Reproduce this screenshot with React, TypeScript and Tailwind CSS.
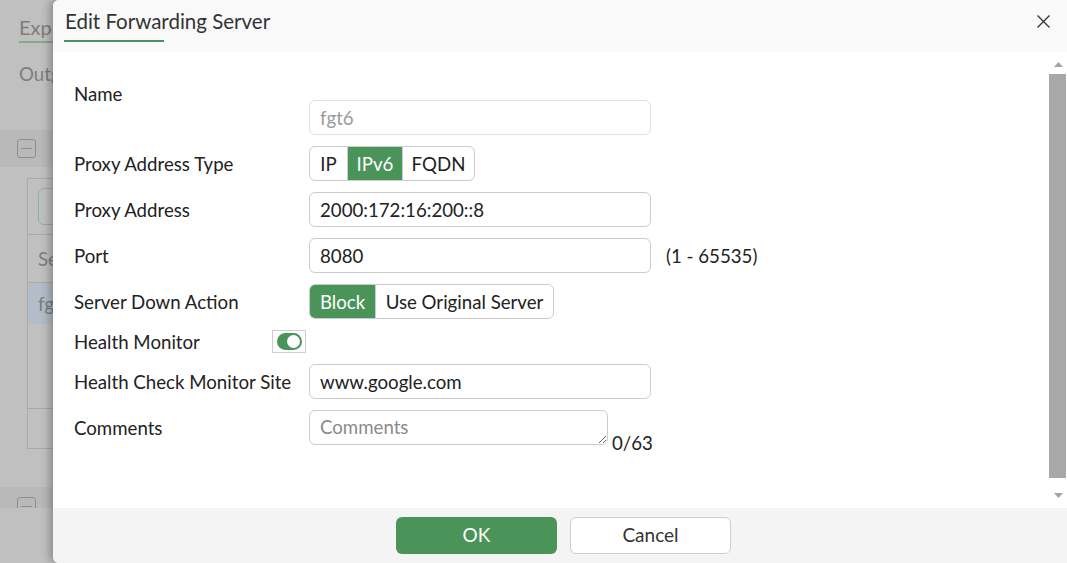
import React from "react";

const GREEN = "bg-[#4a9459]";

function MinusBox() {
  return (
    <div className="flex h-[19px] w-[19px] items-center justify-center rounded-[3px] border border-[#8e8e8e]">
      <div className="h-px w-[11px] bg-[#8e8e8e]" />
    </div>
  );
}

function Background() {
  return (
    <div className="flex h-full flex-col text-[#7d7d7d]">
      <div className="h-[130px] shrink-0 pl-[19px] pt-[15px]">
        <div className="inline-block border-b-2 border-[#86a98e] pb-px text-[20px] leading-[25px]">
          Explicit Proxy
        </div>
        <div className="mt-[19px] text-[18.67px] leading-[24px]">Outgoing Proxy</div>
      </div>
      <div className="flex h-[37px] shrink-0 items-center bg-[#b9b9b9] pl-[17px]">
        <MinusBox />
      </div>
      <div className="h-[11px] shrink-0" />
      <div className="ml-[27px] flex h-[271px] shrink-0 flex-col border-b border-l border-t border-[#a9a9a9]">
        <div className="h-[56px] shrink-0 border-b border-[#a9a9a9] pl-[10px] pt-[9px]">
          <div className="h-[37px] w-[90px] rounded-[6px] border border-[#8fb097]" />
        </div>
        <div className="flex h-[48px] shrink-0 items-center border-b border-[#a9a9a9] pl-[10px] text-[18.67px]">
          Server
        </div>
        <div className="flex h-[41px] shrink-0 items-center bg-[#b4bcc9] pl-[10px] text-[18.67px]">fgt6</div>
        <div className="h-[85px] shrink-0 border-b border-[#a9a9a9]" />
        <div className="flex-1" />
      </div>
      <div className="h-[38px] shrink-0" />
      <div className="h-[21px] shrink-0 overflow-hidden bg-[#b9b9b9] pl-[17px] pt-[10px]">
        <MinusBox />
      </div>
      <div className="flex-1" />
    </div>
  );
}

function Label({ children, w = "w-[235px]" }: { children: React.ReactNode; w?: string }) {
  return <div className={`${w} shrink-0 text-[18.67px] leading-[24px] text-[#222]`}>{children}</div>;
}

function TextInput({ value, disabled }: { value: string; disabled?: boolean }) {
  return (
    <input
      readOnly
      value={value}
      className={`h-[35px] w-[342px] rounded-[6px] border bg-white px-[10px] text-[18.67px] outline-none ${
        disabled ? "border-[#e2e2e2] text-[#9a9a9a]" : "border-[#cdcdcd] text-[#222]"
      }`}
    />
  );
}

function Segmented({ items }: { items: { label: string; w: string; active?: boolean }[] }) {
  return (
    <div className="flex h-[35px] overflow-hidden rounded-[6px] border border-[#cdcdcd] bg-white">
      {items.map((it, i) => (
        <div
          key={it.label}
          className={`flex h-full items-center justify-center text-[18.67px] ${it.w} ${
            i > 0 ? "border-l border-[#cdcdcd]" : ""
          } ${it.active ? `${GREEN} border-[#4a9459] text-white` : "text-[#222]"}`}
        >
          {it.label}
        </div>
      ))}
    </div>
  );
}

function Triangle({ up }: { up?: boolean }) {
  return (
    <svg width="9" height="5" viewBox="0 0 9 5" className="shrink-0">
      {up ? <polygon points="4.5,0 9,5 0,5" fill="#a3a3a3" /> : <polygon points="0,0 9,0 4.5,5" fill="#a3a3a3" />}
    </svg>
  );
}

function Modal() {
  return (
    <div className="absolute left-[53px] top-0 flex h-[563px] w-[1014px] flex-col overflow-hidden rounded-l-[6px] bg-white shadow-[-3px_0_10px_rgba(0,0,0,0.3)]">
      {/* header */}
      <div className="flex h-[52px] shrink-0 items-start justify-between bg-[#f9f9f9] pl-[11px] pr-[17px]">
        <div className="pt-[8px]">
          <div className="pl-px text-[20.5px] leading-[26px] text-[#333]">Edit Forwarding Server</div>
          <div className={`mt-[6px] h-[2px] w-[100px] ${GREEN}`} />
        </div>
        <button className="mt-[15px] flex h-[13px] w-[13px] items-center justify-center">
          <svg width="13" height="13" viewBox="0 0 13 13">
            <path d="M0.5 0.5L12.5 12.5M12.5 0.5L0.5 12.5" stroke="#333" strokeWidth="1.3" />
          </svg>
        </button>
      </div>

      {/* body */}
      <div className="flex min-h-0 flex-1">
        <div className="flex flex-1 flex-col gap-[11px] pl-[21px] pt-[48px]">
          <div className="flex h-[35px] items-start">
            <div className="-mt-[24px] flex h-[35px] items-center">
              <Label>Name</Label>
            </div>
            <TextInput value="fgt6" disabled />
          </div>
          <div className="flex h-[35px] items-center">
            <Label>Proxy Address Type</Label>
            <Segmented
              items={[
                { label: "IP", w: "w-[37px]" },
                { label: "IPv6", w: "w-[55px]", active: true },
                { label: "FQDN", w: "w-[72px]" },
              ]}
            />
          </div>
          <div className="flex h-[35px] items-center">
            <Label>Proxy Address</Label>
            <TextInput value="2000:172:16:200::8" />
          </div>
          <div className="flex h-[35px] items-center">
            <Label>Port</Label>
            <TextInput value="8080" />
            <span className="ml-[15px] text-[18.67px] text-[#222]">(1 - 65535)</span>
          </div>
          <div className="flex h-[35px] items-center">
            <Label>Server Down Action</Label>
            <Segmented
              items={[
                { label: "Block", w: "w-[65px]", active: true },
                { label: "Use Original Server", w: "w-[178px]" },
              ]}
            />
          </div>
          <div className="flex h-[23px] items-center">
            <Label w="w-[198px]">Health Monitor</Label>
            <div className="flex h-[23px] w-[34px] items-center justify-center border border-[#cfcfcf] bg-white">
              <div className={`flex h-[17px] w-[25px] items-center justify-end rounded-full pr-[2px] ${GREEN}`}>
                <div className="h-[13px] w-[13px] rounded-full bg-white" />
              </div>
            </div>
          </div>
          <div className="flex h-[35px] items-center">
            <Label>Health Check Monitor Site</Label>
            <TextInput value="www.google.com" />
          </div>
          <div className="flex h-[35px] items-center">
            <Label>Comments</Label>
            <div className="flex items-end">
              <textarea
                placeholder="Comments"
                className="block h-[35px] w-[299px] resize rounded-[6px] border border-[#cdcdcd] bg-white px-[10px] py-[4px] text-[18.67px] leading-[24px] text-[#222] outline-none placeholder:text-[#8a8a8a]"
              />
              <span className="-mb-[8px] ml-[4px] text-[18.67px] leading-[20px] text-[#222]">0/63</span>
            </div>
          </div>
        </div>
        {/* scrollbar */}
        <div className="flex w-[18px] shrink-0 flex-col items-center">
          <div className="mt-[10px]">
            <Triangle up />
          </div>
          <div className="mt-[7px] h-[404px] w-[17px] self-start bg-[#a8a8a8]" />
          <div className="mt-[15px]">
            <Triangle />
          </div>
        </div>
      </div>

      {/* footer */}
      <div className="flex h-[55px] shrink-0 items-start justify-center gap-[13px] bg-[#f4f4f4] pl-[7px] pt-[9px]">
        <button className={`h-[37px] w-[161px] rounded-[6px] text-[19px] text-white ${GREEN}`}>OK</button>
        <button className="h-[37px] w-[161px] rounded-[6px] border border-[#cfcfcf] bg-white text-[19px] text-[#333]">
          Cancel
        </button>
      </div>
    </div>
  );
}

export default function App() {
  return (
    <div className="relative h-[563px] w-[1067px] overflow-hidden bg-[#c0c0c0] font-['Lato',_'Noto_Sans',_sans-serif]">
      <Background />
      <Modal />
    </div>
  );
}
